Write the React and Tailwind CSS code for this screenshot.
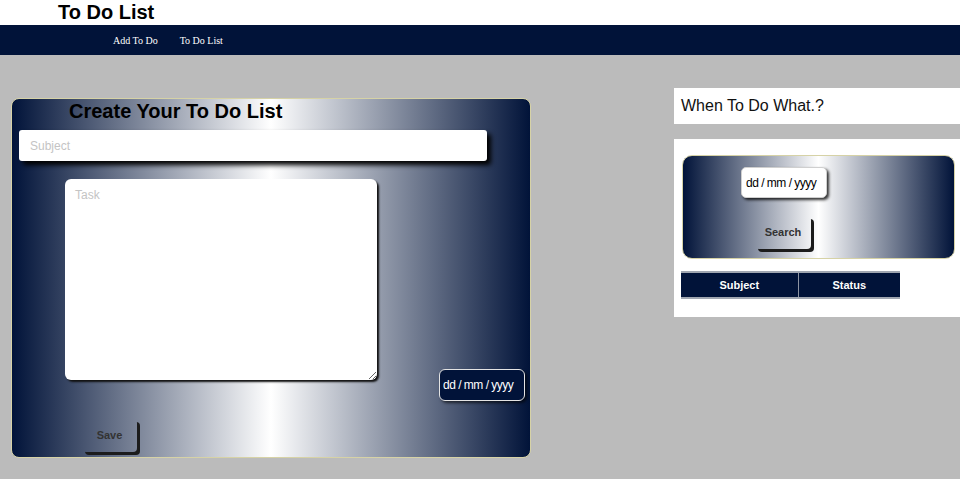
import React from 'react';

export default function App() {
  return (
    <div className="min-h-screen bg-[#bbbbbb] font-['Liberation_Sans',Arial,sans-serif]">
      <header className="h-[25px] bg-white">
        <h1 className="pl-[58px] text-[20px] font-bold leading-[25px] text-black">To Do List</h1>
      </header>
      <nav className="h-[30px] bg-[#011339] flex items-center pl-[113px] gap-[22px] font-['Liberation_Serif','Times_New_Roman',serif] text-[10px] text-white">
        <a href="#" className="text-white">Add To Do</a>
        <a href="#" className="text-white">To Do List</a>
      </nav>

      <main className="flex items-start">
        {/* create form */}
        <div className="ml-[11px] mt-[43px] w-[520px] h-[360px] rounded-[8px] border border-[#d6d2a6] bg-[linear-gradient(to_right,#011339,#ffffff_50%,#011339)] flex flex-col">
          <h2 className="ml-[57px] text-[20px] font-bold leading-[24px] text-black">Create Your To Do List</h2>
          <input
            type="text"
            placeholder="Subject"
            className="mt-[7px] ml-[7px] w-[468px] h-[31px] bg-white rounded-[3px] pl-[11px] text-[12px] outline-none placeholder:text-[#c4c4c4] shadow-[4px_4px_5px_#000]"
          />
          <div className="flex mt-[18px]">
            <textarea
              placeholder="Task"
              className="ml-[53px] w-[312px] h-[201px] bg-white rounded-[6px] px-[10px] py-[7px] text-[12px] outline-none placeholder:text-[#c4c4c4] shadow-[2px_2px_2px_#111]"
            />
            <input
              type="text"
              placeholder="dd / mm / yyyy"
              className="ml-[62px] mt-[190px] w-[86px] h-[32px] bg-[#011339] border border-[#e4e4e4] rounded-[6px] pl-[3px] text-[12px] tracking-[-0.5px] text-white outline-none placeholder:text-white shadow-[2px_2px_3px_rgba(0,0,0,0.6)]"
            />
          </div>
          <button className="mt-[18px] ml-[70px] w-[55px] h-[33px] rounded-[4px] text-[11px] font-bold text-[#333] shadow-[3px_3px_0_#1c1c1c]">
            Save
          </button>
        </div>

        {/* search side */}
        <div className="ml-[143px] mt-[33px] flex-1 flex flex-col gap-[15px]">
          <div className="h-[36px] bg-white pl-[7px] flex items-center text-[16px] text-[#111]">When To Do What.?</div>
          <div className="h-[178px] bg-white pt-[16px] pl-[8px] pr-[5px]">
            <div className="h-[104px] rounded-[10px] border border-[#d6d2a6] bg-[linear-gradient(to_right,#011339,#ffffff_50%,#011339)] flex flex-col items-start">
              <input
                type="text"
                placeholder="dd / mm / yyyy"
                className="mt-[11px] ml-[58px] w-[86px] h-[31px] bg-white border border-[#cfcfcf] rounded-[5px] pl-[4px] text-[12px] tracking-[-0.5px] text-black outline-none placeholder:text-black shadow-[2px_2px_3px_rgba(0,0,0,0.8)]"
              />
              <button className="mt-[18px] ml-[72px] w-[56px] h-[33px] rounded-[4px] text-[11px] font-bold text-[#333] shadow-[3px_3px_0_#1c1c1c]">
                Search
              </button>
            </div>
            <table className="mt-[12px] ml-[-1px] w-[219px] border-collapse">
              <thead>
                <tr className="h-[26px] bg-[#011339] border-y-2 border-[#a0a6b1] text-[11px] font-bold text-white">
                  <th className="w-[117px] font-bold">Subject</th>
                  <th className="border-l border-[#8d94a3] font-bold">Status</th>
                </tr>
              </thead>
            </table>
          </div>
        </div>
      </main>
    </div>
  );
}
